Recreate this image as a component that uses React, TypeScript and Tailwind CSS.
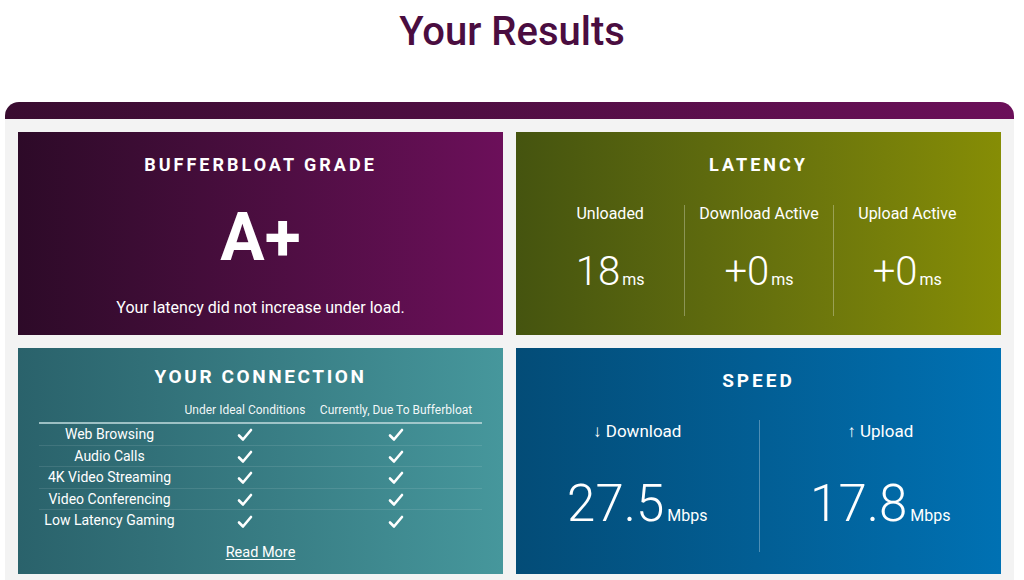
import React from "react";

const FONT = { fontFamily: "Roboto, 'Liberation Sans', sans-serif" };

function Check() {
  return (
    <svg width="16" height="14" viewBox="0 0 16 14" className="inline-block">
      <path d="M2 7.5 L6 11.5 L14 2" fill="none" stroke="white" strokeWidth="2.6" strokeLinecap="round" strokeLinejoin="round" />
    </svg>
  );
}

const rows = ["Web Browsing", "Audio Calls", "4K Video Streaming", "Video Conferencing", "Low Latency Gaming"];

function CardTitle({ children, className = "" }: { children: React.ReactNode; className?: string }) {
  return <h2 className={`text-center font-bold uppercase text-white ${className}`}>{children}</h2>;
}

export default function App() {
  return (
    <div className="min-h-screen bg-white" style={FONT}>
      <h1 className="pt-[8px] h-[55px] text-center text-[40px] leading-[48px] font-medium text-[#4a0d40]">
        Your Results
      </h1>

      <div className="ml-[5px] mt-[47px] w-[1009px]">
        <div className="h-[17px] rounded-t-[14px] bg-linear-to-r from-[#390c30] to-[#6b0f59]" />
        <div className="grid grid-cols-2 gap-[13px] bg-[#f3f3f3] p-[13px]">
          {/* grade */}
          <section className="flex h-[203px] flex-col items-center bg-linear-to-r from-[#2d0a28] to-[#6c0f5a] text-white">
            <CardTitle className="mt-[21px] text-[18px] leading-[24px] tracking-[3px]">Bufferbloat Grade</CardTitle>
            <div className="mt-[23px] text-[66px] font-bold leading-[76px]">A+</div>
            <p className="mt-[21px] text-[16px] leading-[22px]">Your latency did not increase under load.</p>
          </section>

          {/* latency */}
          <section className="flex h-[203px] flex-col bg-linear-to-r from-[#45540f] to-[#868d05] px-5 text-white">
            <CardTitle className="mt-[21px] text-[18px] leading-[24px] tracking-[3px]">Latency</CardTitle>
            <div className="mt-[28px] grid grid-cols-3">
              {[
                ["Unloaded", "18"],
                ["Download Active", "+0"],
                ["Upload Active", "+0"],
              ].map(([label, val], i) => (
                <div
                  key={label}
                  className={`flex h-[111px] flex-col items-center ${i > 0 ? "border-l border-white/30" : ""}`}
                >
                  <div className="mt-[-1px] text-[16px] leading-[20px]">{label}</div>
                  <div className="mt-[26px] flex items-baseline">
                    <span className="text-[40px] font-light leading-[44px]">{val}</span>
                    <span className="ml-[2px] text-[16px]">ms</span>
                  </div>
                </div>
              ))}
            </div>
          </section>

          {/* connection */}
          <section className="flex h-[226px] flex-col bg-linear-to-r from-[#2a626b] to-[#46979c] px-[21px] text-white">
            <CardTitle className="mt-[16px] text-[19px] leading-[26px] tracking-[2.6px]">Your Connection</CardTitle>
            <div className="mt-[11px] grid grid-cols-[141px_130px_1fr] text-[12px] leading-[18px] text-white/95">
              <div />
              <div className="text-center">Under Ideal Conditions</div>
              <div className="text-center">Currently, Due To Bufferbloat</div>
            </div>
            <div className="mt-[3px] border-t-2 border-[#b9d6d8]/80">
              {rows.map((r, i) => (
                <div
                  key={r}
                  className={`grid h-[21.5px] grid-cols-[141px_130px_1fr] items-center text-[14px] ${
                    i < rows.length - 1 ? "border-b border-white/10" : ""
                  }`}
                >
                  <div className="text-center">{r}</div>
                  <div className="text-center">
                    <Check />
                  </div>
                  <div className="text-center">
                    <Check />
                  </div>
                </div>
              ))}
            </div>
            <a className="mt-[10px] self-center text-[14.5px] underline underline-offset-2" href="#">
              Read More
            </a>
          </section>

          {/* speed */}
          <section className="flex h-[226px] flex-col bg-linear-to-r from-[#034c77] to-[#0071b3] text-white">
            <CardTitle className="mt-[20px] text-[19px] leading-[26px] tracking-[3px]">Speed</CardTitle>
            <div className="mt-[26px] grid grid-cols-2">
              {[
                ["↓ Download", "27.5"],
                ["↑ Upload", "17.8"],
              ].map(([label, val], i) => (
                <div
                  key={label}
                  className={`flex h-[132px] flex-col items-center ${i > 0 ? "border-l border-white/30" : ""}`}
                >
                  <div className="mt-[1px] text-[17px] leading-[20px]">{label}</div>
                  <div className="mt-[33px] flex items-baseline">
                    <span className="text-[51px] font-light leading-[60px]">{val}</span>
                    <span className="ml-[3px] text-[16px]">Mbps</span>
                  </div>
                </div>
              ))}
            </div>
          </section>
        </div>
      </div>
    </div>
  );
}
